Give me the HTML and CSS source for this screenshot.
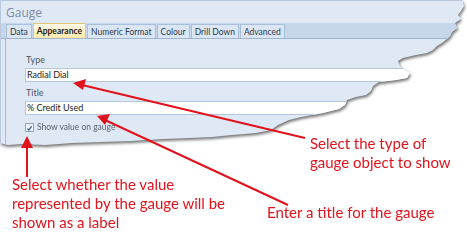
FILE: index.html
```html
<!DOCTYPE html>
<html lang="en">
<head>
    <meta charset="UTF-8">
    <title>Gauge - Appearance</title>
    <link rel="stylesheet" href="styles.css">
</head>
<body>
    <div class="stage">
        <div class="panel-shadow">
            <div class="panel">
                <div class="panel-title">Gauge</div>
                <div class="tabs">
                    <div class="tab">Data</div>
                    <div class="tab active">Appearance</div>
                    <div class="tab">Numeric Format</div>
                    <div class="tab">Colour</div>
                    <div class="tab">Drill Down</div>
                    <div class="tab">Advanced</div>
                </div>
                <div class="tab-body">
                    <div class="field">
                        <div class="field-label">Type</div>
                        <div class="field-input">Radial Dial</div>
                    </div>
                    <div class="field">
                        <div class="field-label">Title</div>
                        <div class="field-input">% Credit Used</div>
                    </div>
                    <label class="check">
                        <span class="check-box">
                            <svg width="9" height="9" viewBox="0 0 9 9">
                                <path d="M1.8 4.6 L3.6 6.6 L7.2 1.8" fill="none" stroke="#2b4f86" stroke-width="1.4"/>
                            </svg>
                        </span>
                        Show value on gauge
                    </label>
                </div>
            </div>
        </div>

        <!-- callout arrows -->
        <svg class="arrows" width="467" height="241" viewBox="0 0 467 241">
            <g stroke="#e1121c" stroke-width="2" fill="none">
                <line x1="305" y1="138" x2="82" y2="85"/>
                <line x1="288" y1="205" x2="105" y2="120"/>
                <line x1="27" y1="177" x2="27" y2="146"/>
            </g>
            <g fill="#e1121c">
                <polygon points="73,83 86,79 83,90"/>
                <polygon points="97,116 110,114 105,125"/>
                <polygon points="27,136 21,148 33,148"/>
            </g>
        </svg>

        <div class="note note-type">Select the type of<br>gauge object to show</div>
        <div class="note note-title">Enter a title for the gauge</div>
        <div class="note note-check">Select whether the value<br>represented by the gauge will be<br>shown as a label</div>
    </div>
</body>
</html>
```

FILE: styles.css
```css
* {
    margin: 0;
    padding: 0;
    box-sizing: border-box;
}

body {
    background: #fff;
    font-family: Lato, "Liberation Sans", sans-serif;
}

.stage {
    position: relative;
    width: 467px;
    height: 241px;
    overflow: hidden;
}

.panel-shadow {
    filter: drop-shadow(1px 2px 1.5px rgba(40, 40, 40, 0.65));
}

.panel {
    height: 150px;
    background: #dfe9f5;
    border-top: 1px solid #b9c9dd;
    border-left: 1px solid #b9c9dd;
    clip-path: polygon(0 0, 462px 0, 464px 6px, 461px 11px, 458px 15px, 461px 19px, 455px 23px, 457px 28px, 452px 32px, 450px 36px, 447px 39px, 442px 43px, 437px 46px, 433px 50px, 427px 53px, 416px 55px, 403px 58px, 398px 61px, 400px 66px, 405px 70px, 410px 73px, 407px 78px, 396px 80px, 379px 82px, 373px 86px, 371px 91px, 366px 95px, 356px 97px, 347px 100px, 345px 105px, 339px 109px, 323px 113px, 301px 117px, 289px 120px, 278px 125px, 271px 130px, 256px 133px, 232px 135px, 212px 137px, 190px 138px, 163px 139px, 131px 141px, 101px 142px, 72px 143px, 45px 145px, 22px 144px, 8px 145px, 0 143px);
}

.panel-title {
    height: 22px;
    padding: 3px 0 0 5px;
    font-family: "Open Sans", sans-serif;
    font-size: 12px;
    color: #7b8ca6;
}

.tabs {
    display: flex;
    gap: 1px;
    height: 16px;
    padding-left: 5px;
    background: #c6d7ec;
    border-bottom: 1px solid #9fb4d0;
}

.tab {
    margin-top: 1px;
    padding: 1px 3px 0;
    font-size: 8.5px;
    line-height: 13px;
    color: #2e3a4a;
    background: #dbe6f4;
    border: 1px solid #aabfda;
    border-bottom: none;
}

.tab.active {
    margin-top: 0;
    font-weight: 700;
    color: #1b1b1b;
    background: linear-gradient(#fffbea, #ffe9a8);
    border-color: #e2c77a;
}

.tab-body {
    margin-left: 4px;
    padding: 15px 0 0 19px;
    height: 120px;
    border-left: 1px solid #a9bcd6;
}

.field {
    margin-bottom: 5px;
}

.field-label {
    font-size: 9px;
    line-height: 12px;
    color: #4d5563;
    padding-left: 1px;
    margin-bottom: 2px;
}

.field-input {
    height: 14px;
    padding-left: 1px;
    font-size: 9px;
    line-height: 12px;
    color: #222;
    background: #fff;
    border: 1px solid #b6c6da;
}

.check {
    display: flex;
    align-items: center;
    gap: 3px;
    margin-top: 5px;
    font-size: 8.5px;
    line-height: 14px;
    color: #5a6270;
}

.check-box {
    display: flex;
    width: 9px;
    height: 9px;
    background: #eef3fa;
    border: 1px solid #8ea4c3;
}

.arrows {
    position: absolute;
    left: 0;
    top: 0;
}

.note {
    position: absolute;
    font-family: Lato, "Open Sans", sans-serif;
    font-size: 15px;
    line-height: 19px;
    color: #e1141e;
    white-space: nowrap;
}

.note-type {
    left: 310px;
    top: 134px;
}

.note-title {
    left: 267px;
    top: 203px;
}

.note-check {
    left: 12px;
    top: 175px;
}
```
